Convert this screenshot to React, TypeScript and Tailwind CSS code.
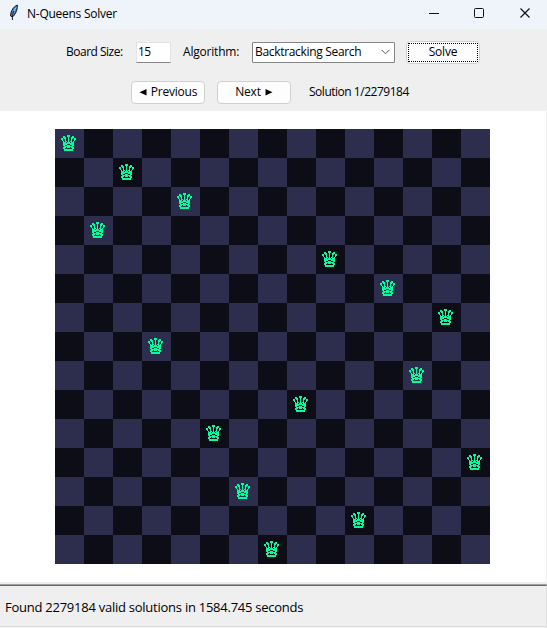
const QUEENS = [0, 2, 4, 1, 9, 11, 13, 3, 12, 8, 5, 14, 6, 10, 7];

const CROWN = [
  "......###......",
  "..##..###..##..",
  "..###..#..###..",
  "##.##..#..##.##",
  "##..#..#..#..##",
  ".#..#..#..#..#.",
  "..#.##.#.##.#..",
  "..###.###.###..",
  "..###########..",
  "..####...####..",
  "..##..###..##..",
  "...#########...",
  "..###.###.###..",
  "..##.......##..",
  "...#########...",
  "...#########...",
];

function Queen() {
  return (
    <svg width="15" height="16" viewBox="0 0 15 16" shapeRendering="crispEdges" className="mt-[6px] ml-[6px] block" fill="#00ff9d">
      {CROWN.flatMap((row, y) =>
        row.split("").map((c, x) => (c === "#" ? <rect key={`${x}-${y}`} x={x} y={y} width="1" height="1" /> : null)),
      )}
    </svg>
  );
}

function Board() {
  return (
    <div className="grid w-[435px] grid-cols-15">
      {QUEENS.flatMap((queen, row) =>
        QUEENS.map((_, col) => (
          <div key={`${row}-${col}`} className={`h-[29px] w-[29px] ${(row + col) % 2 ? "bg-[#0d0d17]" : "bg-[#2d2d4d]"}`}>
            {queen === col && <Queen />}
          </div>
        )),
      )}
    </div>
  );
}

function Feather() {
  return (
    <svg width="12" height="17" viewBox="0 0 12 17" className="ml-[8px] block">
      <path d="M9.3 1C6.5 2 3.6 5.5 2.8 9.2L2.6 12 4.4 13C7 11 9 7 9.3 3.5Z" fill="#4283c9" stroke="#151a22" strokeWidth="1" />
      <path d="M8 3.5C6 6.5 5 9 4.4 12" fill="none" stroke="#b6d9f5" strokeWidth="1" />
      <path d="M5.8 7C4.6 9.5 4.4 12 4.4 16" fill="none" stroke="#111" strokeWidth="1" />
    </svg>
  );
}

export default function App() {
  return (
    <div className="flex h-[628px] w-[547px] flex-col overflow-hidden bg-[#efefef] font-['Open_Sans','Noto_Sans',sans-serif] text-[12px] leading-4 whitespace-nowrap text-black">
      <header className="flex h-[29px] shrink-0 items-start bg-[#eef4f9]">
        <div className="pt-[4px]"><Feather /></div>
        <h1 className="mt-[6px] ml-[7px] w-[391px] tracking-[-0.26px]">N-Queens Solver</h1>
        <svg width="110" height="28" viewBox="0 0 110 28" fill="none" stroke="#111" className="ml-[7px] block">
          <path d="M4 13.5h10" />
          <rect x="49.5" y="8.5" width="9" height="9" rx="1" />
          <path d="M95.5 8.5l9 9m0-9l-9 9" strokeWidth="1.2" />
        </svg>
      </header>

      <div className="flex h-[82px] shrink-0 flex-col">
        <div className="flex h-[46px] items-center pl-[66px]">
          <span className="w-[70px] tracking-[-0.5px]">Board Size:</span>
          <div className="h-[21px] w-[35px] border border-[#e2e2e2] border-b-[#858585] bg-white pt-px pl-px tracking-[-0.7px]">15</div>
          <span className="ml-[12px] w-[69px] tracking-[-0.2px]">Algorithm:</span>
          <div className="flex h-[21px] w-[143px] items-center justify-between rounded-[1px] border border-[#858585] bg-white pr-[4px] pl-[2px] tracking-[-0.32px]">
            <span>Backtracking Search</span>
            <svg width="9" height="6" viewBox="0 0 9 6" fill="none" stroke="#555"><path d="M.5.8l4 4 4-4" /></svg>
          </div>
          <div className="ml-[11px] h-[23px] w-[74px] rounded-[4px] border border-[#d0d0d0] bg-[#fdfdfd] p-px">
            <div className="flex h-full items-center justify-center border border-dotted border-black tracking-[-0.2px]">Solve</div>
          </div>
        </div>
        <div className="flex h-[34px] items-center pl-[131px]">
          <div className="flex h-[23px] w-[74px] items-center justify-center gap-[4px] rounded-[4px] border border-[#d0d0d0] bg-[#fdfdfd]">
            <svg width="8" height="8" viewBox="0 0 8 8"><path d="M7.5 1v6.4L.5 4.2z" /></svg>
            <span className="tracking-[-0.2px]">Previous</span>
          </div>
          <div className="ml-[12px] flex h-[23px] w-[74px] items-center justify-center gap-[4px] rounded-[4px] border border-[#d0d0d0] bg-[#fdfdfd]">
            <span className="tracking-[-0.2px]">Next</span>
            <svg width="8" height="8" viewBox="0 0 8 8"><path d="M.5 1v6.4l7-3.2z" /></svg>
          </div>
          <span className="ml-[18px] tracking-[-0.48px]">Solution 1/2279184</span>
        </div>
      </div>

      <main className="mr-px h-[471px] shrink-0 bg-white pt-[18px] pl-[55px]">
        <Board />
      </main>

      <footer className="mt-[2px] flex h-[43px] items-start border-t border-[#a0a0a0]">
        <div className="h-full w-full border-t border-r border-t-[#696969] border-r-[#dedede] border-b border-b-[#dedede] pt-[13px] pl-[5px] text-[13px] tracking-[-0.25px]">
          Found 2279184 valid solutions in 1584.745 seconds
        </div>
      </footer>
    </div>
  );
}
